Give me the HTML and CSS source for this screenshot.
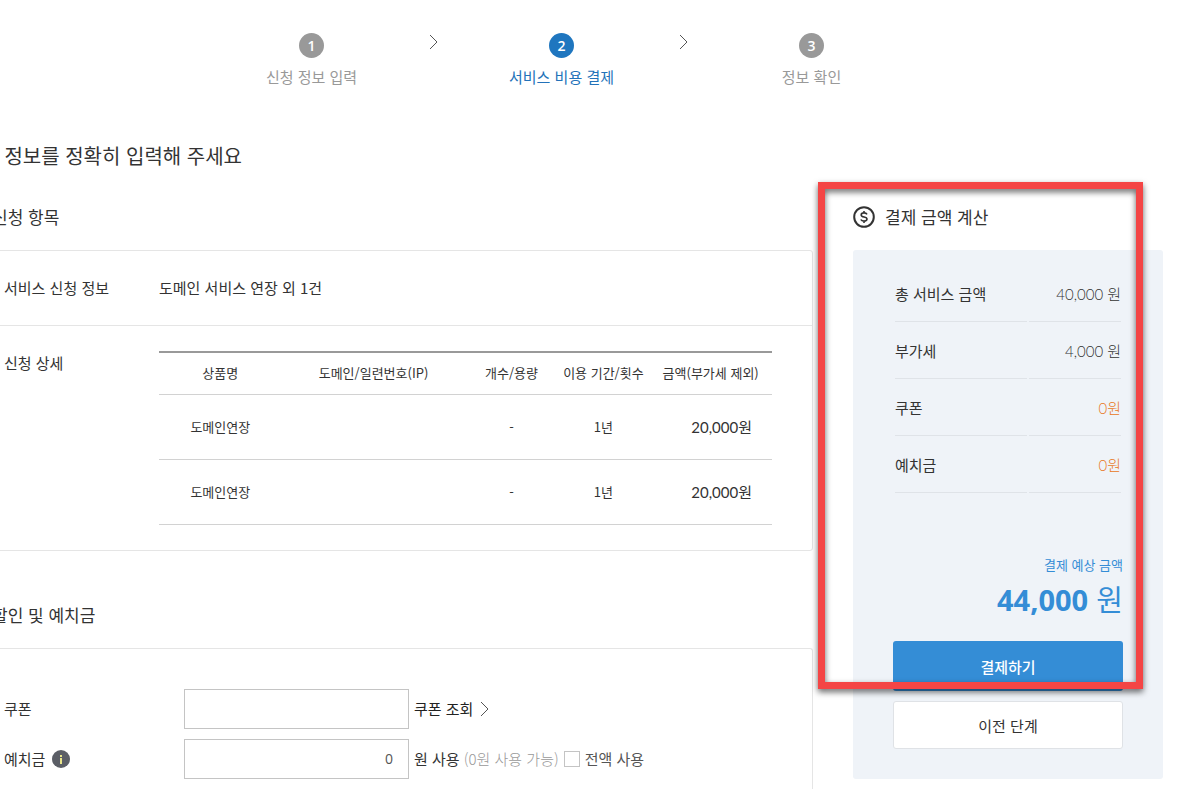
FILE: index.html
```html
<!DOCTYPE html>
<html lang="ko">
<head>
    <meta charset="UTF-8">
    <meta name="viewport" content="width=device-width, initial-scale=1.0">
    <title>서비스 비용 결제</title>
    <link rel="stylesheet" href="styles.css">
</head>
<body>
    <div class="page">
        <!-- 진행 단계 -->
        <ol class="steps">
            <li class="step"><span class="num">1</span>신청 정보 입력</li>
            <li class="arrow"><svg width="10" height="16" viewBox="0 0 10 16"><path d="M1 1l7 7-7 7"/></svg></li>
            <li class="step on"><span class="num">2</span>서비스 비용 결제</li>
            <li class="arrow"><svg width="10" height="16" viewBox="0 0 10 16"><path d="M1 1l7 7-7 7"/></svg></li>
            <li class="step"><span class="num">3</span>정보 확인</li>
        </ol>

        <h1>아래 정보를 정확히 입력해 주세요</h1>

        <div class="columns">
            <main>
                <!-- 신청 항목 -->
                <h2>신청 항목</h2>
                <section class="box">
                    <div class="row">
                        <h3>서비스 신청 정보</h3>
                        <p>도메인 서비스 연장 외 1건</p>
                    </div>
                    <div class="row">
                        <h3>신청 상세</h3>
                        <table class="items">
                            <colgroup>
                                <col class="c-name">
                                <col class="c-domain">
                                <col class="c-count">
                                <col class="c-period">
                                <col class="c-price">
                            </colgroup>
                            <thead>
                                <tr>
                                    <th>상품명</th>
                                    <th>도메인/일련번호(IP)</th>
                                    <th>개수/용량</th>
                                    <th>이용 기간/횟수</th>
                                    <th>금액(부가세 제외)</th>
                                </tr>
                            </thead>
                            <tbody>
                                <tr>
                                    <td>도메인연장</td>
                                    <td></td>
                                    <td>-</td>
                                    <td>1년</td>
                                    <td class="price">20,000원</td>
                                </tr>
                                <tr>
                                    <td>도메인연장</td>
                                    <td></td>
                                    <td>-</td>
                                    <td>1년</td>
                                    <td class="price">20,000원</td>
                                </tr>
                            </tbody>
                        </table>
                    </div>
                </section>

                <!-- 할인 및 예치금 -->
                <h2>할인 및 예치금</h2>
                <section class="box discount">
                    <div class="field">
                        <label class="name" for="coupon">쿠폰</label>
                        <input type="text" id="coupon">
                        <a href="#">쿠폰 조회 <svg width="10" height="16" viewBox="0 0 10 16"><path d="M1 1l7 7-7 7"/></svg></a>
                    </div>
                    <div class="field">
                        <label class="name" for="deposit">예치금
                            <svg class="info" width="18" height="18" viewBox="0 0 18 18"><circle cx="9" cy="9" r="9"/><path d="M8 5h2v2H8zM8 8h2v6H8z"/></svg>
                        </label>
                        <input type="text" id="deposit" value="0">
                        <span>원 사용 <em>(0원 사용 가능)</em></span>
                        <label class="all"><input type="checkbox"> 전액 사용</label>
                    </div>
                </section>
            </main>

            <!-- 결제 금액 계산 -->
            <aside>
                <h2>
                    <svg class="coin" width="22" height="22" viewBox="0 0 22 22"><circle cx="11" cy="11" r="9.8"/><path class="dollar" d="M14 8.400c-.5-1-1.500-1.500-3-1.500-1.700 0-2.800.8-2.800 2 0 2.900 5.800 1.300 5.800 4.200 0 1.200-1.100 2-3 2-1.600 0-2.700-.6-3.200-1.600M11 5v2M11 15v2"/></svg>
                    결제 금액 계산
                </h2>
                <div class="bill">
                    <table class="sum">
                        <tr><th>총 서비스 금액</th><td>40,000 원</td></tr>
                        <tr><th>부가세</th><td>4,000 원</td></tr>
                        <tr><th>쿠폰</th><td class="minus">0원</td></tr>
                        <tr><th>예치금</th><td class="minus">0원</td></tr>
                    </table>
                    <p class="total-label">결제 예상 금액</p>
                    <p class="total"><strong>44,000</strong> 원</p>
                    <button type="button" class="pay">결제하기</button>
                    <button type="button" class="prev">이전 단계</button>
                </div>
                <div class="mark"></div>
            </aside>
        </div>
    </div>
</body>
</html>
```

FILE: styles.css
```css
* {
    box-sizing: border-box;
}

body {
    margin: 0;
    overflow-x: hidden;
    background: #fff;
    color: #333;
    font-family: "Noto Sans CJK KR", sans-serif;
    font-size: 15px;
    font-weight: 400;
    line-height: 20px;
}

h1, h2, h3, p, ol {
    margin: 0;
    padding: 0;
    font-weight: inherit;
}

svg {
    fill: none;
    stroke: #555;
    stroke-width: 1;
}

/* 왼쪽 여백은 화면 밖으로 나감 */
.page {
    display: flex;
    flex-direction: column;
    min-height: 100vh;
    margin-left: -40px;
    padding: 33px 22px 0 0;
}

/* 진행 단계 */
.steps {
    display: flex;
    justify-content: center;
    list-style: none;
    color: #999;
}

.step {
    display: flex;
    flex-direction: column;
    align-items: center;
    gap: 9px;
    width: 120px;
}

.num {
    width: 25px;
    height: 25px;
    border-radius: 50%;
    background: #999;
    color: #fff;
    font-family: "Open Sans", sans-serif;
    font-size: 14px;
    font-weight: 600;
    line-height: 25px;
    text-align: center;
}

.step.on {
    color: #2372b9;
}

.on .num {
    background: #1f76bf;
}

.arrow {
    width: 130px;
    padding: 1px 6px 0 0;
    text-align: center;
}

h1 {
    margin-top: 54px;
    padding-left: 2px;
    font-size: 20px;
    line-height: 30px;
}

.columns {
    display: flex;
    flex: 1;
    gap: 40px;
    margin-top: 34px;
}

main {
    display: flex;
    flex: 1;
    flex-direction: column;
}

h2 {
    margin-bottom: 21px;
    font-size: 17px;
    line-height: 24px;
}

main h2 {
    padding-left: 32px;
}

.box {
    border: 1px solid #e5e5e5;
    border-radius: 3px;
}

.box + h2 {
    margin-top: 52px;
}

.row {
    display: flex;
    padding: 27px 40px 27px 43px;
}

.row + .row {
    padding: 25px 40px 25px 43px;
    border-top: 1px solid #e5e5e5;
}

.row h3 {
    width: 155px;
    font-size: 15px;
}

.row + .row h3 {
    padding-top: 2px;
}

/* 신청 상세 표 */
.items {
    flex: 1;
    table-layout: fixed;
    border-collapse: collapse;
    border-top: 2px solid #999;
    font-size: 13px;
    text-align: center;
}

.items th,
.items td {
    height: 65px;
    padding: 0;
    border-bottom: 1px solid #d2d2d2;
    font-weight: 400;
}

.items th {
    height: 42px;
}

.c-name { width: 20%; }
.c-domain { width: 30%; }
.c-count { width: 15%; }
.c-period { width: 15%; }
.c-price { width: 20%; }

.items .price {
    padding-right: 20px;
    font-family: Lato, "Noto Sans CJK KR", sans-serif;
    font-size: 15px;
    text-align: right;
}

/* 할인 및 예치금 */
.discount {
    flex: 1;
    padding: 40px 40px 10px 43px;
    border-bottom: 0;
    border-radius: 3px 3px 0 0;
}

.field {
    display: flex;
    align-items: center;
    gap: 5px;
}

.field + .field {
    margin-top: 10px;
}

.name {
    display: flex;
    align-items: center;
    gap: 7px;
    width: 175px;
}

.field input[type="text"] {
    width: 225px;
    height: 40px;
    padding: 0 15px;
    border: 1px solid #c4c4c4;
    background: #fff;
    color: #555;
    font-family: "Open Sans", sans-serif;
    font-size: 14px;
    text-align: right;
}

.field a {
    display: flex;
    align-items: center;
    gap: 7px;
    color: #222;
    text-decoration: none;
}

.field em {
    color: #999;
    font-style: normal;
    font-weight: 300;
}

.info circle {
    fill: #5b5e66;
    stroke: none;
}

.info path {
    fill: #e9e58a;
    stroke: none;
}

.all {
    display: flex;
    align-items: center;
    gap: 5px;
    color: #555;
}

.all input {
    appearance: none;
    width: 16px;
    height: 16px;
    margin: 0;
    border: 1px solid #c4c4c4;
    background: #fff;
}

/* 결제 금액 */
aside {
    position: relative;
    align-self: flex-start;
    width: 310px;
}

aside h2 {
    display: flex;
    align-items: center;
    gap: 10px;
}

.coin {
    stroke: #333;
    stroke-width: 2;
}

.dollar {
    stroke-width: 1.6;
}

.bill {
    padding: 15px 40px 30px;
    border-radius: 3px;
    background: #eff3f8;
}

.sum {
    width: 100%;
    border-spacing: 2px 0;
}

.sum th,
.sum td {
    height: 57px;
    padding: 2px 0 0;
    border-bottom: 1px solid #dfe3e8;
    font-weight: 400;
    text-align: left;
}

.sum td {
    width: 92px;
    font-family: Lato, "Noto Sans CJK KR", sans-serif;
    font-weight: 300;
    text-align: right;
}

.sum .minus {
    color: #e87722;
}

.total-label {
    margin-top: 62px;
    color: #348dd6;
    font-size: 13px;
    text-align: right;
}

.total {
    margin-top: 3px;
    color: #348dd6;
    font-size: 29px;
    line-height: 40px;
    text-align: right;
}

.total strong {
    font-family: "Open Sans", sans-serif;
    font-weight: 700;
}

.bill button {
    display: block;
    width: 100%;
    height: 50px;
    padding: 0;
    border: 0;
    border-radius: 3px;
    font-family: inherit;
    font-size: 15px;
}

.bill .pay {
    margin-top: 21px;
    background: #348dd6;
    color: #fff;
    font-weight: 500;
}

.bill .prev {
    height: 48px;
    margin-top: 10px;
    border: 1px solid #dfe2e6;
    background: #fff;
    color: #333;
    font-weight: 400;
}

/* 강조 테두리 */
.mark {
    position: absolute;
    top: -23px;
    right: 20px;
    bottom: 90px;
    left: -35px;
    border: 7px solid #f44545;
    filter: drop-shadow(0 3px 3px rgba(0, 0, 0, 0.6));
    pointer-events: none;
}
```
